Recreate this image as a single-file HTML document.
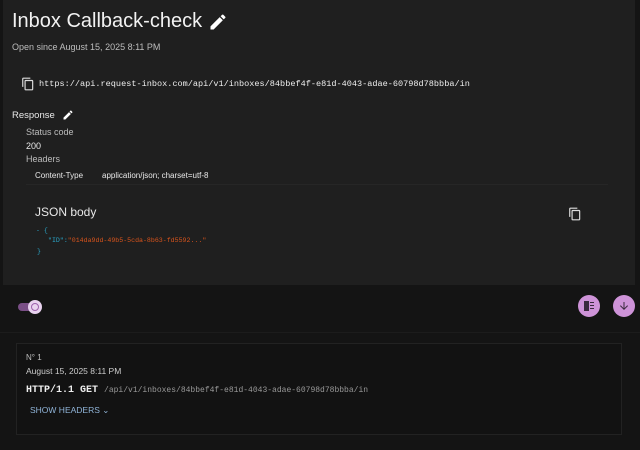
<!DOCTYPE html>
<html><head><meta charset="utf-8"><style>
*{margin:0;padding:0;box-sizing:border-box}
body{width:640px;height:450px;background:#141414;font-family:"Liberation Sans",sans-serif;color:#e8e8e8;position:relative;overflow:hidden}
.panel{position:absolute;left:3px;top:0;width:632px;height:285px;background:#1f1f1f}
.abs{position:absolute;white-space:nowrap}
.mono{font-family:"Liberation Mono",monospace}
.sep{position:absolute;height:1px;background:#262626}
.fab{position:absolute;width:22px;height:22px;border-radius:50%;background:#ce93d8}
</style></head><body>
<div class="panel"></div>
<div class="abs" style="left:12px;top:10px;font-size:20px;color:#f2f2f2">Inbox Callback-check</div>
<svg class="abs" style="left:208px;top:12px" width="20" height="20" viewBox="0 0 24 24"><path fill="#fff" d="M3 17.25V21h3.75L17.81 9.94l-3.75-3.75L3 17.25zM20.71 7.04a1 1 0 0 0 0-1.41l-2.34-2.34a1 1 0 0 0-1.41 0l-1.83 1.83 3.75 3.75 1.83-1.83z"/></svg>
<div class="abs" style="left:12px;top:42px;font-size:9px;color:#bdbdbd">Open since August 15, 2025 8:11 PM</div>
<svg class="abs" style="left:21px;top:77px" width="14" height="14" viewBox="0 0 24 24"><path fill="#ddd" d="M16 1H4a2 2 0 0 0-2 2v14h2V3h12V1zm3 4H8a2 2 0 0 0-2 2v14a2 2 0 0 0 2 2h11a2 2 0 0 0 2-2V7a2 2 0 0 0-2-2zm0 16H8V7h11v14z"/></svg>
<div class="abs mono" style="left:39px;top:79px;font-size:8.55px;color:#eee">https://api.request-inbox.com/api/v1/inboxes/84bbef4f-e81d-4043-adae-60798d78bbba/in</div>
<div class="abs" style="left:12px;top:110px;font-size:9.5px">Response</div>
<svg class="abs" style="left:62px;top:109px" width="12" height="12" viewBox="0 0 24 24"><path fill="#fff" d="M3 17.25V21h3.75L17.81 9.94l-3.75-3.75L3 17.25zM20.71 7.04a1 1 0 0 0 0-1.41l-2.34-2.34a1 1 0 0 0-1.41 0l-1.83 1.83 3.75 3.75 1.83-1.83z"/></svg>
<div class="abs" style="left:26px;top:127px;font-size:9px;color:#bdbdbd">Status code</div>
<div class="abs" style="left:26px;top:141px;font-size:9px">200</div>
<div class="abs" style="left:26px;top:154px;font-size:9px;color:#bdbdbd">Headers</div>
<div class="abs" style="left:35px;top:171px;font-size:8px">Content-Type</div>
<div class="abs" style="left:102px;top:171px;font-size:8px">application/json; charset=utf-8</div>
<div class="sep" style="left:26px;top:184px;width:582px"></div>
<div class="abs" style="left:35px;top:205px;font-size:12px">JSON body</div>
<svg class="abs" style="left:568px;top:207px" width="14" height="14" viewBox="0 0 24 24"><path fill="#ddd" d="M16 1H4a2 2 0 0 0-2 2v14h2V3h12V1zm3 4H8a2 2 0 0 0-2 2v14a2 2 0 0 0 2 2h11a2 2 0 0 0 2-2V7a2 2 0 0 0-2-2zm0 16H8V7h11v14z"/></svg>
<div class="abs mono" style="left:36px;top:227px;font-size:6.6px;color:#2aa5c8">- {</div>
<div class="abs mono" style="left:48px;top:237px;font-size:6.6px;color:#2aa5c8">"ID":<span style="color:#d8541c">"014da9dd-49b5-5cda-8b63-fd5592..."</span></div>
<div class="abs mono" style="left:37px;top:248px;font-size:6.6px;color:#2aa5c8">}</div>
<div class="abs" style="left:18px;top:303px;width:16px;height:8px;border-radius:4px;background:#7a4f86"></div>
<div class="abs" style="left:28px;top:300px;width:14px;height:14px;border-radius:50%;background:#e9d2ef"></div>
<div class="abs" style="left:31px;top:303px;width:8px;height:8px;border-radius:50%;border:1.2px solid #9c62ab"></div>
<div class="fab" style="left:578px;top:295px"></div>
<div class="abs" style="left:584px;top:301px;width:5px;height:10px;background:#3a2a3e"></div>
<div class="abs" style="left:590px;top:302px;width:4px;height:1px;background:#3a2a3e;box-shadow:0 3px #3a2a3e,0 6px #3a2a3e"></div>
<div class="fab" style="left:613px;top:295px"></div>
<svg class="abs" style="left:618px;top:300px" width="12" height="12" viewBox="0 0 24 24"><path fill="#3a2a3e" d="M20 12l-1.41-1.41L13 16.17V4h-2v12.17l-5.58-5.59L4 12l8 8 8-8z"/></svg>
<div class="sep" style="left:0;top:332px;width:640px;background:#1c1c1c"></div>
<div class="abs" style="left:16px;top:343px;width:606px;height:92px;border:1px solid #222;background:#121212"></div>
<div class="abs" style="left:26px;top:353px;font-size:8px;color:#bdbdbd">N° 1</div>
<div class="abs" style="left:26px;top:366px;font-size:8.5px;color:#ccc">August 15, 2025 8:11 PM</div>
<div class="abs mono" style="left:26px;top:385px;font-size:10px;color:#eee;font-weight:bold">HTTP/1.1 GET <span style="font-size:8px;font-weight:normal;color:#999">/api/v1/inboxes/84bbef4f-e81d-4043-adae-60798d78bbba/in</span></div>
<div class="abs" style="left:30px;top:405px;font-size:8.5px;color:#90b4d8">SHOW HEADERS ⌄</div>
</body></html>
